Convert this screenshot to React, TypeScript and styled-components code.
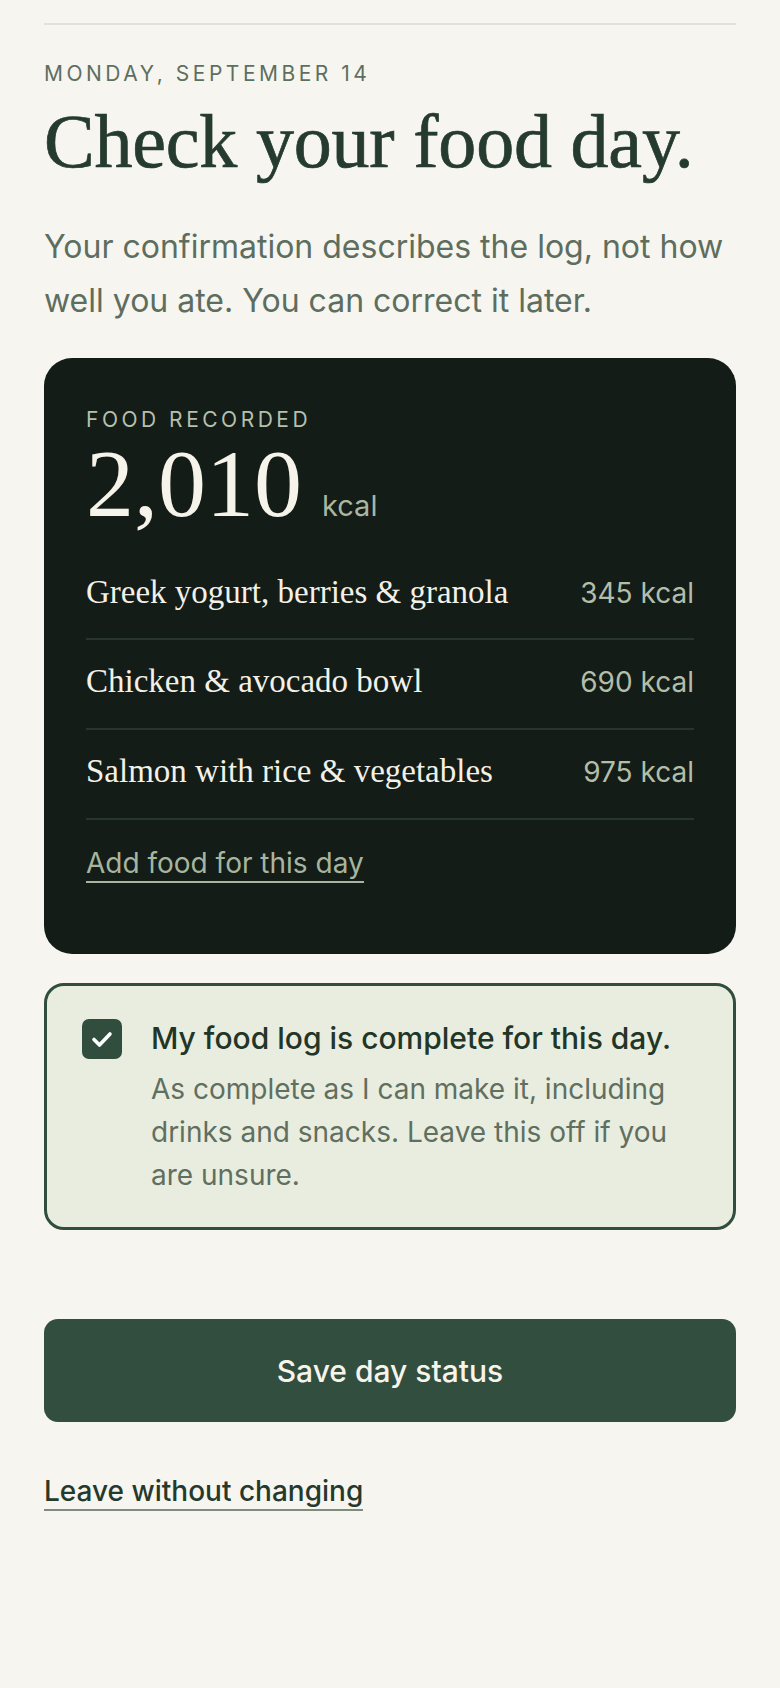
import styled, { createGlobalStyle } from 'styled-components';

const GlobalStyle = createGlobalStyle`
  html, body {
    margin: 0;
    padding: 0;
    background: #f7f5ef;
  }
  body {
    font-family: Inter, 'Noto Sans', sans-serif;
    -webkit-font-smoothing: antialiased;
  }
`;

const Page = styled.main`
  min-height: 1688px;
  padding: 23px 44px 60px;
  box-sizing: border-box;
  background: #f7f5ef;
`;

const TopRule = styled.hr`
  margin: 0;
  border: none;
  border-top: 2px solid #e0e1d7;
`;

const Eyebrow = styled.div<{ $light?: boolean }>`
  font-size: 21px;
  line-height: 28px;
  letter-spacing: 0.167em;
  text-transform: uppercase;
  color: ${(p) => (p.$light ? '#b6c0ae' : '#5d6f5f')};
`;

const DateLabel = styled(Eyebrow)`
  margin-top: 35px;
`;

const Title = styled.h1`
  margin: 12px 0 0;
  font-family: 'Liberation Serif', 'Times New Roman', serif;
  font-weight: 400;
  font-size: 76px;
  line-height: 1.1;
  letter-spacing: -0.2px;
  color: #263b2f;
  -webkit-text-stroke: 0.7px #263b2f;
`;

const Lead = styled.p`
  margin: 36px 0 0;
  font-size: 32px;
  line-height: 54px;
  color: #5d6e5f;
`;

const SummaryCard = styled.section`
  margin-top: 30px;
  padding: 48px 42px 71px;
  border-radius: 28px;
  background: #131c16;
`;

const Total = styled.div`
  display: flex;
  align-items: baseline;
  gap: 20px;
  margin-top: 3px;
`;

const TotalNumber = styled.span`
  font-family: 'Liberation Serif', 'Times New Roman', serif;
  font-size: 96px;
  line-height: 94px;
  color: #f6f3ea;
`;

const Unit = styled.span`
  font-size: 29px;
  color: #a9b6a2;
`;

const FoodList = styled.ul`
  list-style: none;
  margin: 20px 0 0;
  padding: 0;
`;

const FoodRow = styled.li`
  display: flex;
  align-items: baseline;
  justify-content: space-between;
  padding: 20px 0 25px;
  border-bottom: 2px solid #27362d;
`;

const FoodName = styled.span`
  font-family: 'Liberation Serif', 'Times New Roman', serif;
  font-size: 33px;
  line-height: 1.3;
  color: #f3f0e8;
`;

const FoodKcal = styled.span`
  font-size: 28px;
  line-height: 1.3;
  color: #b3beaa;
`;

const TextLink = styled.a<{ $tone: 'sage' | 'dark' }>`
  display: inline-block;
  font-size: 28px;
  line-height: 1.25;
  font-weight: ${(p) => (p.$tone === 'dark' ? 500 : 400)};
  color: ${(p) => (p.$tone === 'dark' ? '#25392d' : '#a8b59e')};
  text-decoration: none;
  border-bottom: 2px solid ${(p) => (p.$tone === 'dark' ? '#7d8d7c' : '#a8b59e')};
  cursor: pointer;
`;

const AddLink = styled(TextLink)`
  margin-top: 26px;
`;

const ConfirmCard = styled.label`
  display: flex;
  align-items: flex-start;
  gap: 29px;
  margin-top: 29px;
  padding: 33px 35px 30px;
  border: 3px solid #304d3e;
  border-radius: 20px;
  background: #e9eddf;
  cursor: pointer;
`;

const Box = styled.span`
  flex: none;
  display: flex;
  align-items: center;
  justify-content: center;
  width: 40px;
  height: 40px;
  border-radius: 7px;
  background: #304d3e;
`;

const ConfirmText = styled.div`
  display: flex;
  flex-direction: column;
  gap: 10px;
`;

const ConfirmTitle = styled.span`
  font-size: 30px;
  line-height: 1.3;
  font-weight: 500;
  color: #223628;
`;

const ConfirmHint = styled.span`
  font-size: 28px;
  line-height: 43px;
  color: #5f6f60;
`;

const SaveButton = styled.button`
  display: block;
  width: 100%;
  height: 103px;
  margin-top: 89px;
  border: none;
  border-radius: 14px;
  background: #324e3f;
  color: #f7f4ec;
  font-family: inherit;
  font-size: 30px;
  font-weight: 500;
  cursor: pointer;
`;

const LeaveRow = styled.div`
  margin-top: 52px;
`;

const foods = [
  { name: 'Greek yogurt, berries & granola', kcal: 345 },
  { name: 'Chicken & avocado bowl', kcal: 690 },
  { name: 'Salmon with rice & vegetables', kcal: 975 },
];

const App = () => {
  const total = foods.reduce((sum, f) => sum + f.kcal, 0);

  return (
    <>
      <GlobalStyle />
      <Page>
        <TopRule />
        <DateLabel>Monday, September 14</DateLabel>
        <Title>Check your food day.</Title>
        <Lead>
          Your confirmation describes the log, not how well you ate. You can
          correct it later.
        </Lead>

        <SummaryCard>
          <Eyebrow $light>Food recorded</Eyebrow>
          <Total>
            <TotalNumber>{total.toLocaleString('en-US')}</TotalNumber>
            <Unit>kcal</Unit>
          </Total>
          <FoodList>
            {foods.map((f) => (
              <FoodRow key={f.name}>
                <FoodName>{f.name}</FoodName>
                <FoodKcal>{f.kcal} kcal</FoodKcal>
              </FoodRow>
            ))}
          </FoodList>
          <AddLink $tone="sage">Add food for this day</AddLink>
        </SummaryCard>

        <ConfirmCard>
          <Box>
            <svg width="24" height="24" viewBox="0 0 24 24" fill="none">
              <polyline
                points="4 12.5 9.5 18 20 7"
                stroke="#ffffff"
                strokeWidth="3.6"
                strokeLinecap="round"
                strokeLinejoin="round"
              />
            </svg>
          </Box>
          <ConfirmText>
            <ConfirmTitle>My food log is complete for this day.</ConfirmTitle>
            <ConfirmHint>
              As complete as I can make it, including drinks and snacks. Leave
              this off if you are unsure.
            </ConfirmHint>
          </ConfirmText>
        </ConfirmCard>

        <SaveButton type="button">Save day status</SaveButton>

        <LeaveRow>
          <TextLink $tone="dark">Leave without changing</TextLink>
        </LeaveRow>
      </Page>
    </>
  );
};

export default App;
